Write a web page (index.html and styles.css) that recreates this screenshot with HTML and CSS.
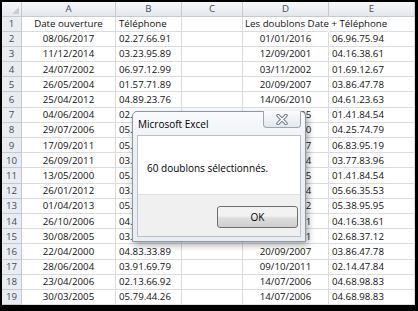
FILE: index.html
```html
<!DOCTYPE html>
<html lang="fr">
<head>
    <meta charset="UTF-8">
    <title>Doublons Date + Téléphone</title>
    <link rel="stylesheet" href="styles.css">
</head>
<body>

<div class="frame">
    <div class="sheet">
        <div class="corner"></div>
        <div class="colhead">A</div>
        <div class="colhead">B</div>
        <div class="colhead">C</div>
        <div class="colhead">D</div>
        <div class="colhead">E</div>

        <div class="rowhead">1</div><div class="cell mid">Date ouverture</div><div class="cell">Téléphone</div><div class="cell"></div><div class="cell spill">Les doublons Date + Téléphone</div><div class="cell"></div>
        <div class="rowhead">2</div><div class="cell mid">08/06/2017</div><div class="cell">02.27.66.91</div><div class="cell"></div><div class="cell mid">01/01/2016</div><div class="cell">06.96.75.94</div>
        <div class="rowhead">3</div><div class="cell mid">11/12/2014</div><div class="cell">03.23.95.89</div><div class="cell"></div><div class="cell mid">12/09/2001</div><div class="cell">04.16.38.61</div>
        <div class="rowhead">4</div><div class="cell mid">24/07/2002</div><div class="cell">06.97.12.99</div><div class="cell"></div><div class="cell mid">03/11/2002</div><div class="cell">01.69.12.67</div>
        <div class="rowhead">5</div><div class="cell mid">26/05/2004</div><div class="cell">01.57.71.89</div><div class="cell"></div><div class="cell mid">20/09/2007</div><div class="cell">03.86.47.78</div>
        <div class="rowhead">6</div><div class="cell mid">25/04/2012</div><div class="cell">04.89.23.76</div><div class="cell"></div><div class="cell mid">14/06/2010</div><div class="cell">04.61.23.63</div>
        <div class="rowhead">7</div><div class="cell mid">04/06/2004</div><div class="cell">02.41.18.53</div><div class="cell"></div><div class="cell mid">13/05/2005</div><div class="cell">01.41.84.54</div>
        <div class="rowhead">8</div><div class="cell mid">29/07/2006</div><div class="cell">05.62.70.14</div><div class="cell"></div><div class="cell mid">22/08/2010</div><div class="cell">04.25.74.79</div>
        <div class="rowhead">9</div><div class="cell mid">17/09/2011</div><div class="cell">05.18.36.47</div><div class="cell"></div><div class="cell mid">05/02/2007</div><div class="cell">06.83.95.19</div>
        <div class="rowhead">10</div><div class="cell mid">26/09/2011</div><div class="cell">03.77.83.96</div><div class="cell"></div><div class="cell mid">18/11/2004</div><div class="cell">03.77.83.96</div>
        <div class="rowhead">11</div><div class="cell mid">13/05/2000</div><div class="cell">05.24.61.30</div><div class="cell"></div><div class="cell mid">13/05/2005</div><div class="cell">01.41.84.54</div>
        <div class="rowhead">12</div><div class="cell mid">26/01/2012</div><div class="cell">03.59.12.88</div><div class="cell"></div><div class="cell mid">09/03/2014</div><div class="cell">05.66.35.53</div>
        <div class="rowhead">13</div><div class="cell mid">01/04/2013</div><div class="cell">05.38.95.95</div><div class="cell"></div><div class="cell mid">01/04/2012</div><div class="cell">05.38.95.95</div>
        <div class="rowhead">14</div><div class="cell mid">26/10/2006</div><div class="cell">04.16.38.61</div><div class="cell"></div><div class="cell mid">12/09/2001</div><div class="cell">04.16.38.61</div>
        <div class="rowhead">15</div><div class="cell mid">30/08/2005</div><div class="cell">03.72.40.16</div><div class="cell"></div><div class="cell mid">27/06/2011</div><div class="cell">02.68.37.12</div>
        <div class="rowhead">16</div><div class="cell mid">22/04/2000</div><div class="cell">04.83.33.89</div><div class="cell"></div><div class="cell mid">20/09/2007</div><div class="cell">03.86.47.78</div>
        <div class="rowhead">17</div><div class="cell mid">28/06/2004</div><div class="cell">03.91.69.79</div><div class="cell"></div><div class="cell mid">09/10/2011</div><div class="cell">02.14.47.84</div>
        <div class="rowhead">18</div><div class="cell mid">23/04/2006</div><div class="cell">02.13.66.92</div><div class="cell"></div><div class="cell mid">14/07/2006</div><div class="cell">04.68.98.83</div>
        <div class="rowhead">19</div><div class="cell mid">30/03/2005</div><div class="cell">05.79.44.26</div><div class="cell"></div><div class="cell mid">14/07/2006</div><div class="cell">04.68.98.83</div>
    </div>

    <!-- Boîte de message -->
    <div class="dialog">
        <div class="titlebar">
            <span>Microsoft Excel</span>
            <div class="close">
                <svg width="14" height="11" viewBox="0 0 14 11">
                    <path d="M3 1.5 L11 9.5 M11 1.5 L3 9.5" stroke="#6c7683" stroke-width="3.4" stroke-linecap="round"/>
                    <path d="M3 1.5 L11 9.5 M11 1.5 L3 9.5" stroke="#ffffff" stroke-width="1.6" stroke-linecap="round"/>
                </svg>
            </div>
        </div>
        <div class="client">
            <div class="message">60 doublons sélectionnés.</div>
            <div class="buttons">
                <button type="button">OK</button>
            </div>
        </div>
    </div>
</div>

</body>
</html>
```

FILE: styles.css
```css
body {
    margin: 0;
    background: #000;
    font-family: "Open Sans", "Noto Sans", sans-serif;
}

.frame {
    position: relative;
    width: 418px;
    height: 311px;
    padding: 2px 3px 0 2px;
    box-sizing: border-box;
}

.sheet {
    display: grid;
    grid-template-columns: 20px 94px 66px 61px 86px 86px;
    grid-template-rows: 14.5px repeat(19, 15.2px);
    background: #fff;
    font-size: 9.7px;
    color: #111;
}

.corner,
.colhead,
.rowhead {
    box-sizing: border-box;
    border-right: 1px solid #c5cad1;
    border-bottom: 1px solid #c5cad1;
    color: #3e4c5e;
    display: flex;
    align-items: center;
    justify-content: center;
}

.corner {
    position: relative;
    background: linear-gradient(#f6f7f9, #e6e9ed);
}

.corner::after {
    content: "";
    position: absolute;
    right: 2px;
    bottom: 2px;
    border-left: 7px solid transparent;
    border-bottom: 7px solid #c9ced5;
}

.colhead {
    background: linear-gradient(#f6f7f9, #e4e7eb);
}

.rowhead {
    background: #e9edf2;
}

.cell {
    box-sizing: border-box;
    border-right: 1px solid #dadcdd;
    border-bottom: 1px solid #dadcdd;
    padding: 0 3px;
    display: flex;
    align-items: center;
    white-space: nowrap;
    overflow: visible;
}

.cell.mid {
    justify-content: center;
}

.cell.spill {
    padding-left: 2px;
    border-right-color: transparent;
}

/* Boîte de message */
.dialog {
    position: absolute;
    left: 132px;
    top: 111px;
    width: 174px;
    height: 131px;
    box-sizing: border-box;
    border: 1px solid #8c97a5;
    border-radius: 5px 5px 0 0;
    background: linear-gradient(#f8fafc, #eceff4 30%, #e9edf2);
    box-shadow: 2px 3px 7px rgba(0, 0, 0, 0.35);
    padding: 0 4px 4px 4px;
    display: flex;
    flex-direction: column;
    font-size: 10px;
    color: #000;
}

.titlebar {
    position: relative;
    height: 23px;
    display: flex;
    align-items: center;
    padding-left: 1px;
}

.close {
    position: absolute;
    right: 0;
    top: -1px;
    width: 38px;
    height: 17px;
    box-sizing: border-box;
    border: 1px solid #9ca6b3;
    border-top: none;
    border-radius: 0 0 4px 4px;
    background: linear-gradient(#fbfcfd, #e3e8ee);
    display: flex;
    align-items: center;
    justify-content: center;
}

.client {
    flex: 1;
    border: 1px solid #b8c1cc;
    display: flex;
    flex-direction: column;
}

.message {
    background: #fff;
    height: 58px;
    display: flex;
    align-items: center;
    padding-left: 9px;
    padding-top: 6px;
    box-sizing: border-box;
}

.buttons {
    flex: 1;
    background: #f0f0f0;
    border-top: 1px solid #dfdfdf;
    display: flex;
    justify-content: flex-end;
    align-items: flex-start;
    padding: 11px 2px 0 0;
}

button {
    width: 81px;
    height: 22px;
    border: 1px solid #707070;
    border-radius: 3px;
    background: linear-gradient(#f2f2f2 45%, #dddddd 55%, #cfcfcf);
    font-family: "Open Sans", "Noto Sans", sans-serif;
    font-size: 10px;
    color: #000;
    padding: 0;
}
```
